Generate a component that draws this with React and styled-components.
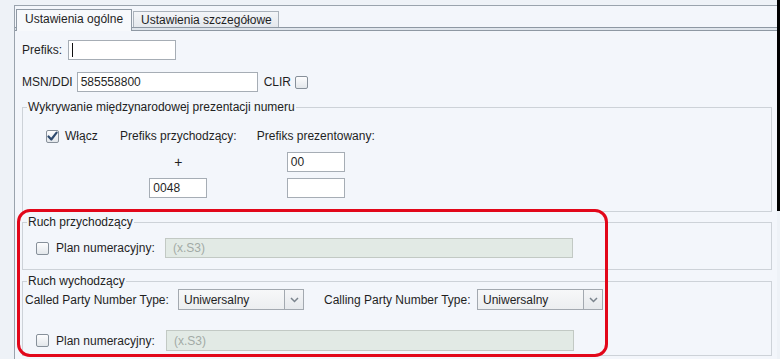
import React from "react";
import styled, { createGlobalStyle } from "styled-components";

const GlobalStyle = createGlobalStyle`
  html, body { margin: 0; padding: 0; background: #f2f5fa; }
  body {
    font-family: "Liberation Sans", Arial, sans-serif;
    font-size: 12px;
    color: #1f1f1f;
  }
  * { box-sizing: border-box; }
`;

const Page = styled.div`
  position: relative;
  width: 780px;
  height: 359px;
  overflow: hidden;
  display: flex;
  background: #eef2f7;
`;

const Main = styled.div`
  flex: 1;
  padding: 5px 0 0 14px;
  display: flex;
  flex-direction: column;
`;

const EdgeBar = styled.div`
  width: 3px;
  flex-shrink: 0;
  &::before {
    content: "";
    display: block;
    height: 211px;
    background: #000;
  }
`;

const TabPanel = styled.div`
  flex: 1;
  border-left: 1px solid #9aa3ad;
  border-top: 1px solid #9aa3ad;
  background: #f3f6fb;
  display: flex;
  flex-direction: column;
`;

const TabStrip = styled.div`
  height: 21px;
  display: flex;
  align-items: flex-end;
  padding-left: 1px;
  gap: 1px;
`;

const Tab = styled.div`
  position: relative;
  display: flex;
  align-items: center;
  white-space: nowrap;
  border: 1px solid ${(p) => (p.$active ? "#8f99a4" : "#aab2bb")};
  border-bottom: none;
  height: ${(p) => (p.$active ? "22px" : "16px")};
  margin-bottom: ${(p) => (p.$active ? "-4px" : "0")};
  z-index: ${(p) => (p.$active ? 1 : 0)};
  padding: ${(p) => (p.$active ? "0 8px 3px 8px" : "0 6px 0 7px")};
  background: ${(p) =>
    p.$active ? "#f7f9fc" : "linear-gradient(#f3f5f8, #e4e8ed)"};
  color: #1f1f1f;
`;

const StripBar = styled.div`
  height: 4px;
  border-top: 1px solid #8e98a3;
  border-bottom: 1px solid #8e98a3;
  background: #dfe5ec;
`;

const Body = styled.div`
  padding: 9px 5px 0 7px;
`;

const FormRow = styled.div`
  display: flex;
  align-items: center;
  height: ${(p) => p.$h || 20}px;
  margin-top: ${(p) => p.$mt || 0}px;
  padding-left: ${(p) => p.$pl || 0}px;
`;

const Label = styled.span`
  white-space: nowrap;
  margin-right: ${(p) => p.$mr ?? 4}px;
  margin-left: ${(p) => p.$ml || 0}px;
  width: ${(p) => (p.$w ? `${p.$w}px` : "auto")};
  flex-shrink: 0;
`;

const TextBox = styled.div`
  width: ${(p) => p.$w}px;
  height: ${(p) => p.$h || 20}px;
  border: 1px solid #a6adb5;
  background: #ffffff;
  padding: 0 3px;
  display: flex;
  align-items: center;
  flex-shrink: 0;
`;

const DisabledBox = styled(TextBox)`
  background: #e2eae5;
  border-color: #c2c9c4;
  color: #a2aaa6;
  padding: 0 7px;
`;

const Caret = styled.span`
  width: 1px;
  height: 14px;
  background: #111;
`;

const Check = styled.span`
  width: 13px;
  height: 13px;
  border: 1px solid #87909a;
  border-radius: 2px;
  background: linear-gradient(#fdfdfe, #e3e7eb);
  display: inline-flex;
  align-items: center;
  justify-content: center;
  flex-shrink: 0;
  margin-right: ${(p) => p.$mr || 0}px;
`;

const Fieldset = styled.fieldset`
  margin: ${(p) => p.$mt}px 0 0 0;
  border: 1px solid #cdd2d8;
  padding: ${(p) => p.$pad};
  min-width: 0;
`;

const Legend = styled.legend`
  padding: 0 1px;
  margin-left: 4px;
  line-height: 14px;
  font-size: 12px;
  color: #222;
`;

const FieldContent = styled.div`
  padding-left: ${(p) => p.$pl}px;
`;

const IntlGrid = styled.div`
  display: grid;
  grid-template-columns: 54px auto auto;
  grid-template-rows: 20px 20px 20px;
  column-gap: 20px;
  row-gap: 6px;
  justify-content: start;
  align-items: center;
  padding-left: 23px;
`;

const Cell = styled.div`
  display: flex;
  align-items: center;
  justify-content: ${(p) => (p.$center ? "center" : "flex-start")};
  white-space: nowrap;
  font-size: ${(p) => (p.$big ? "14px" : "12px")};
`;

const Select = styled.div`
  width: 126px;
  height: 21px;
  border: 1px solid #a3a9b0;
  display: flex;
  flex-shrink: 0;
  background: linear-gradient(#f7f8f9, #eceef0);
`;

const SelectText = styled.div`
  flex: 1;
  display: flex;
  align-items: center;
  padding-left: 5px;
`;

const Trigger = styled.div`
  width: 19px;
  border-left: 1px solid #a3a9b0;
  display: flex;
  align-items: center;
  justify-content: center;
  background: linear-gradient(#f4f5f7, #e6e9ec);
`;

const Highlight = styled.div`
  position: absolute;
  left: 17px;
  top: 209px;
  width: 591px;
  height: 148px;
  border: 3px solid #e2071a;
  border-radius: 13px;
  pointer-events: none;
`;

const CheckBox = ({ checked, mr }) => (
  <Check $mr={mr}>
    {checked && (
      <svg width="11" height="11" viewBox="0 0 11 11">
        <path
          d="M1.5 5.5 L4.3 8.5 L9.6 1.6"
          fill="none"
          stroke="#2f4b6f"
          strokeWidth="2.2"
          strokeLinecap="round"
          strokeLinejoin="round"
        />
      </svg>
    )}
  </Check>
);

const Chevron = () => (
  <svg width="9" height="6" viewBox="0 0 9 6">
    <path d="M1 1 L4.5 4.5 L8 1" fill="none" stroke="#7a838c" strokeWidth="1.5" />
  </svg>
);

const Combo = ({ value }) => (
  <Select>
    <SelectText>{value}</SelectText>
    <Trigger>
      <Chevron />
    </Trigger>
  </Select>
);

export default function App() {
  return (
    <>
      <GlobalStyle />
      <Page>
        <Main>
          <TabPanel>
            <TabStrip>
              <Tab $active>Ustawienia ogólne</Tab>
              <Tab>Ustawienia szczegółowe</Tab>
            </TabStrip>
            <StripBar />
            <Body>
              <FormRow>
                <Label $mr={6}>Prefiks:</Label>
                <TextBox $w={108}>
                  <Caret />
                </TextBox>
              </FormRow>
              <FormRow $mt={12}>
                <Label>MSN/DDI</Label>
                <TextBox $w={181}>585558800</TextBox>
                <Label $ml={6}>CLIR</Label>
                <CheckBox />
              </FormRow>

              <Fieldset $mt={8} $pad="12px 0 13px 0">
                <Legend>Wykrywanie międzynarodowej prezentacji numeru</Legend>
                <IntlGrid>
                  <Cell>
                    <CheckBox checked mr={6} />
                    Włącz
                  </Cell>
                  <Cell>Prefiks przychodzący:</Cell>
                  <Cell>Prefiks prezentowany:</Cell>

                  <Cell />
                  <Cell $center $big>+</Cell>
                  <Cell $center>
                    <TextBox $w={58}>00</TextBox>
                  </Cell>

                  <Cell />
                  <Cell $center>
                    <TextBox $w={58}>0048</TextBox>
                  </Cell>
                  <Cell $center>
                    <TextBox $w={58} />
                  </Cell>
                </IntlGrid>
              </Fieldset>

              <Fieldset $mt={3} $pad="9px 0 11px 0">
                <Legend>Ruch przychodzący</Legend>
                <FieldContent $pl={13}>
                  <FormRow>
                    <CheckBox mr={7} />
                    <Label $w={109} $mr={0}>Plan numeracyjny:</Label>
                    <DisabledBox $w={408}>(x.S3)</DisabledBox>
                  </FormRow>
                </FieldContent>
              </Fieldset>

              <Fieldset $mt={4} $pad="1px 0 4px 0">
                <Legend>Ruch wychodzący</Legend>
                <FieldContent $pl={2}>
                  <FormRow $h={21}>
                    <Label $w={153} $mr={0}>Called Party Number Type:</Label>
                    <Combo value="Uniwersalny" />
                    <Label $w={153} $ml={20} $mr={0}>Calling Party Number Type:</Label>
                    <Combo value="Uniwersalny" />
                  </FormRow>
                  <FormRow $h={21} $mt={20} $pl={11}>
                    <CheckBox mr={7} />
                    <Label $w={110} $mr={0}>Plan numeracyjny:</Label>
                    <DisabledBox $w={408} $h={21}>(x.S3)</DisabledBox>
                  </FormRow>
                </FieldContent>
              </Fieldset>
            </Body>
          </TabPanel>
        </Main>
        <EdgeBar />
        <Highlight />
      </Page>
    </>
  );
}
